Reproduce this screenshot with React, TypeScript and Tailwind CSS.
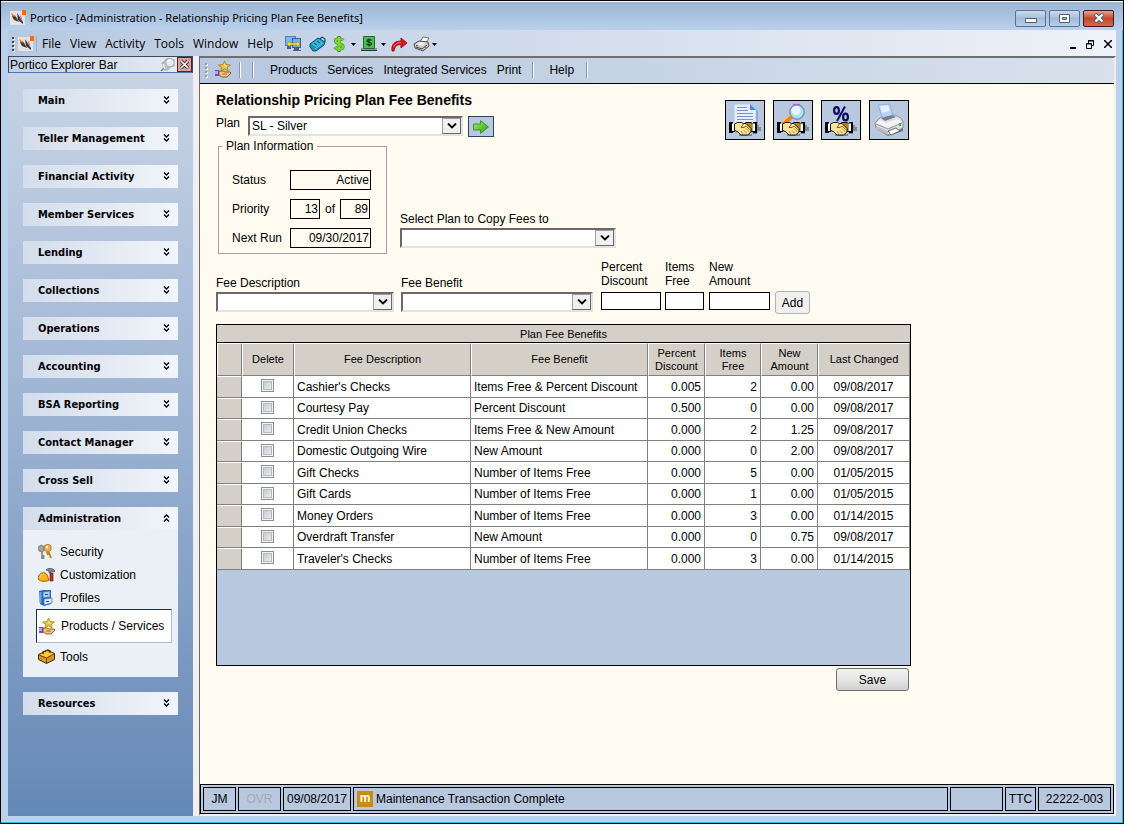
import { useId, useState, type ReactNode } from "react";

const FEES = [
  ["Cashier's Checks", "Items Free & Percent Discount", "0.005", "2", "0.00", "09/08/2017"],
  ["Courtesy Pay", "Percent Discount", "0.500", "0", "0.00", "09/08/2017"],
  ["Credit Union Checks", "Items Free & New Amount", "0.000", "2", "1.25", "09/08/2017"],
  ["Domestic Outgoing Wire", "New Amount", "0.000", "0", "2.00", "09/08/2017"],
  ["Gift Checks", "Number of Items Free", "0.000", "5", "0.00", "01/05/2015"],
  ["Gift Cards", "Number of Items Free", "0.000", "1", "0.00", "01/05/2015"],
  ["Money Orders", "Number of Items Free", "0.000", "3", "0.00", "01/14/2015"],
  ["Overdraft Transfer", "New Amount", "0.000", "0", "0.75", "09/08/2017"],
  ["Traveler's Checks", "Number of Items Free", "0.000", "3", "0.00", "01/14/2015"],
];

const GROUPS = [
  "Main",
  "Teller Management",
  "Financial Activity",
  "Member Services",
  "Lending",
  "Collections",
  "Operations",
  "Accounting",
  "BSA Reporting",
  "Contact Manager",
  "Cross Sell",
  "Administration",
  "Resources",
];

/* ---------- icons ---------- */

function Logo() {
  return (
    <svg width="17" height="16" viewBox="0 0 17 16" className="shrink-0">
      <path d="M0 1h15v14H0z" fill="#e6e2e4" />
      <path d="M1 3l5 3 1 5-4-3z" fill="#f2733a" />
      <path d="M2 6l4 1 3 5-5-2z" fill="#39393d" />
      <path d="M7 3l2 3 4 6v2L8 10z" fill="#39393d" />
      <path d="M9 4l3 3v4z" fill="#ef8a5e" />
      <path d="M12 0h4v5h-4z" fill="#ff6a00" />
    </svg>
  );
}

function Grip({ light = false }: { light?: boolean }) {
  return (
    <svg width="4" height="16" viewBox="0 0 4 16" className="shrink-0">
      {[1, 5, 9, 13].map((y) => (
        <g key={y}>
          <rect x="1" y={y + 1} width="2" height="2" fill="#fff" />
          <rect x="0" y={y} width="2" height="2" fill={light ? "#8d9bb5" : "#2c4373"} />
        </g>
      ))}
    </svg>
  );
}

function StarHand() {
  return (
    <svg width="16" height="17" viewBox="0 0 16 17" className="shrink-0">
      <path d="M0 9h4v6H0z" fill="#6a4fd0" />
      <path d="M0 10h3v3H0z" fill="#b9a4f4" />
      <path d="M4 10h4l2 1h5l1 1-4 4H7l-3-2z" fill="#f3c583" stroke="#6e4512" strokeWidth=".8" />
      <path d="M7 13h5" stroke="#a66c25" />
      <path d="M9.500 0l1.500 3.500 4.500.5-3.300 2.500 1 3.500-3.700-2-3.700 2 1-3.500L3.500 4 8 3.500z" fill="#f2c230" stroke="#9a7420" strokeWidth=".7" />
      <path d="M9 3l1 2 2 .5" stroke="#fff3a5" fill="none" />
    </svg>
  );
}

function Monitors() {
  return (
    <svg width="17" height="16" viewBox="0 0 17 16">
      <path d="M0 0h11v10H0z" fill="#5d7bb8" />
      <path d="M1 1h9v8H1z" fill="#75b9f3" />
      <path d="M7 2h9v10H7z" fill="#3f5fa4" />
      <path d="M8 3h7v8H8z" fill="#6fb0f0" />
      <path d="M9 12h5v2h2v1H8v-1h1zM2 10h4v3H2z" fill="#4d5d86" />
      <path d="M2 8l3-3v2h7V5l3 3-3 3V9H5v2z" fill="#ffe02e" stroke="#9b7c00" strokeWidth=".5" />
    </svg>
  );
}

function Ticket() {
  return (
    <svg width="17" height="16" viewBox="0 0 17 16">
      <path d="M1 8l8-6 7 4-1 3-8 6H4l-3-4z" fill="#1c93b9" stroke="#084f74" />
      <path d="M2 8l7-5 5 3-7 5z" fill="#3fbcd8" />
      <path d="M5 7l3 2M8 5l3 2" stroke="#075e80" strokeWidth="1.200" />
      <path d="M11 3l2-2 3 2v3" fill="none" stroke="#084f74" strokeWidth="1.200" />
      <path d="M6 13l8-6" stroke="#7fdcf0" strokeWidth=".8" />
    </svg>
  );
}

function Dollar() {
  return (
    <svg width="12" height="16" viewBox="0 0 12 16">
      <path
        d="M10 4.500C9 2.500 2.500 2 2.500 5S10 7.500 10 10.500 3.500 14 2 11M6 0v16"
        fill="none"
        stroke="#3b8a1a"
        strokeWidth="3.200"
      />
      <path d="M10 4.500C9 2.500 2.500 2 2.500 5S10 7.500 10 10.500 3.500 14 2 11M6 1v14" fill="none" stroke="#7ed82f" strokeWidth="2" />
    </svg>
  );
}

function Cash() {
  return (
    <svg width="16" height="16" viewBox="0 0 16 16">
      <path d="M0 12h16v3H0z" fill="#8a929b" />
      <path d="M0 14h16v1H0z" fill="#2c3036" />
      <path d="M2.500.5h11v12h-11z" fill="#57b757" stroke="#1e6d28" />
      <path d="M10.500 4.500c-1-1.300-4.500-1.300-4.500.4s4.500 1 4.500 2.900-3.800 1.500-5 .1M8 2.500v8" fill="none" stroke="#0a3f10" strokeWidth="1.200" />
    </svg>
  );
}

function RedArrow() {
  return (
    <svg width="17" height="15" viewBox="0 0 17 15">
      <path d="M1 14C0 7 4 4 10 4V1l6 5-6 5V8C6 7 4 9 3 14z" fill="#df1717" stroke="#7d0707" strokeWidth=".8" />
      <path d="M2.500 10C4 7 6 5.500 10 5.500" stroke="#ff7b6e" fill="none" />
    </svg>
  );
}

function SmallPrinter() {
  return (
    <svg width="17" height="16" viewBox="0 0 17 16">
      <path d="M7 6l3-5 6 1-4 6z" fill="#fff" stroke="#555" strokeWidth=".8" />
      <path d="M1 8l5-3 9 1 1 4-6 5-8-3z" fill="#c9c9c9" stroke="#3d3d3d" strokeWidth=".9" />
      <path d="M3 8l4-2 6 1-4 3z" fill="#efefef" />
      <path d="M3 11l6 2 5-4" fill="none" stroke="#4a4a4a" />
      <path d="M3 9h2v1H3z" fill="#e02020" />
      <path d="M11 11h2v1h-2z" fill="#2fa12f" />
    </svg>
  );
}

function Keys() {
  return (
    <svg width="15" height="16" viewBox="0 0 15 16">
      <path d="M0 3l3-2 4 2v3L4 8 1 7z" fill="#a3a3a3" stroke="#666" strokeWidth=".7" />
      <path d="M4 7v8M5.500 11v4" stroke="#8a8a8a" strokeWidth="1.800" />
      <path d="M6 2l4-2 3 2v4l-3 2-4-2z" fill="#e9b45a" stroke="#9b6518" strokeWidth=".8" />
      <path d="M8 2h2v2H8z" fill="#fff3cf" />
      <path d="M9 8l1 3M10.500 7.500L13 14" stroke="#c8811b" strokeWidth="2" />
    </svg>
  );
}

function HardHat() {
  return (
    <svg width="17" height="14" viewBox="0 0 17 14">
      <path d="M0 11c0-5 4-7 7-6 2 1 3 3 3 5l1 2c-3 2-8 2-11-1z" fill="#ffb41c" stroke="#8f5200" strokeWidth=".9" />
      <path d="M2 9c1-2 2-3 4-3" stroke="#ffe28a" fill="none" />
      <path d="M12 5h3v8h-3z" fill="#c62f17" stroke="#5d1207" strokeWidth=".6" />
      <path d="M8 2l3-2 4 1 2 2-1 1-3-1v2h-2V3z" fill="#7e8790" stroke="#32373c" strokeWidth=".6" />
    </svg>
  );
}

function Cabinet() {
  return (
    <svg width="15" height="16" viewBox="0 0 15 16">
      <path d="M1 1l4-1h8v14l-7 2-4-2z" fill="#2f67b8" />
      <path d="M5 2l7-1v6l-7 1z" fill="#a9cff2" stroke="#3b6ca9" strokeWidth=".7" />
      <path d="M6 9l8-1v5l-8 2z" fill="#d4e9fb" stroke="#3b6ca9" strokeWidth=".7" />
      <path d="M7 4h3v1H7zM8 11h3v1H8z" fill="#21508e" />
      <path d="M2.500 2v11" stroke="#6fa3e4" strokeWidth="2" />
    </svg>
  );
}

function Toolbox() {
  return (
    <svg width="17" height="15" viewBox="0 0 17 15">
      <path d="M.5 5.500l9-4 7 3v6l-8 4-8-4z" fill="#e79c12" stroke="#442500" />
      <path d="M1 6l7 3 8-4-7-3z" fill="#ffc935" />
      <path d="M1 6l7.500 3 7.500-4M8.500 9v5" fill="none" stroke="#6f3c00" />
      <path d="M5 5V3l5-2 2 1v2" fill="none" stroke="#442500" strokeWidth="1.300" />
      <path d="M3 8h2v2H3zM11 8h2v2h-2z" fill="#fff1a0" stroke="#6f3c00" strokeWidth=".5" />
    </svg>
  );
}

function Pin() {
  return (
    <svg width="15" height="14" viewBox="0 0 15 14">
      <path d="M1 13l4-4" stroke="#777" strokeWidth="1.200" />
      <path d="M2 5l2 7 4 0 2-3 4-1V2l-4-2-4 1-2 3z" fill="#b9bcc2" stroke="#999ca3" strokeWidth=".8" />
      <circle cx="10" cy="4.500" r="3.500" fill="#e9eaee" />
      <path d="M3 6l2 5" stroke="#f4f4f6" strokeWidth="1.500" />
      <path d="M8 3.500c1-1.500 2-1.500 3-1" stroke="#fff" fill="none" strokeWidth="1.300" />
    </svg>
  );
}

function Handshake() {
  return (
    <g>
      <path d="M31 25h3v2h2v4h-4v3h-5v2H14v-2h13l4-4z" fill="#868a91" />
      <path d="M4 22h4v2h2v8H8v1H4z" fill="#000" />
      <path d="M7 23.500h2.500v7.500H7z" fill="#fff" />
      <path d="M18 24.500l3-2h5l2 1.500v7.500h-3l-2 2z" fill="#b9820f" stroke="#000" strokeWidth=".9" />
      <path d="M28 22h4v11h-4z" fill="#000" />
      <path d="M27.500 23.500h2.500v7.500h-2.500z" fill="#fff" />
      <path
        d="M9.500 24l3-1.500h4l2 1 2.500 0 5 5v3l-1.500 2-2 1.500h-6.500l-3.500-3.500-3-1z"
        fill="#ffe39a"
        stroke="#000"
        strokeWidth=".9"
      />
      <path d="M18.500 24l-2.500 3.500h3l2-1.500 4.500 4" fill="none" stroke="#7a4f08" strokeWidth=".9" />
      <path d="M19 30.500l3 3M21 28.500l3.500 3.500M16 31l2 3" fill="none" stroke="#a87a25" strokeWidth=".8" />
    </g>
  );
}

function PlanDocument() {
  return (
    <svg width="38" height="38" viewBox="1 1 38 38">
      <path d="M10 6h18l5 5v22H10z" fill="#8fa3c4" />
      <path d="M9 4h17l5 5v23H9z" fill="#e5eefc" stroke="#a9c1ea" strokeWidth=".8" />
      <path d="M25 4l6 6h-6z" fill="#2f8ee2" />
      <path d="M12 7.500h10M12 10.500h11M12 13.500h16M12 16.500h16M12 19.500h16" stroke="#7892c8" />
      <Handshake />
    </svg>
  );
}

function PlanSearch() {
  return (
    <svg width="38" height="38" viewBox="1 1 38 38">
      <path d="M10 24l9-8" stroke="#ea8420" strokeWidth="4.500" />
      <path d="M9 22l9-8" stroke="#ffc46b" strokeWidth="1.400" />
      <path d="M8.500 23l3 3" stroke="#b93ed0" strokeWidth="1.500" />
      <circle cx="24" cy="12" r="7.200" fill="#a6e3fa" stroke="#8492ad" strokeWidth="1.500" />
      <path d="M20 4.500h7" stroke="#d04fe0" strokeWidth="1.300" />
      <circle cx="23" cy="10.500" r="4.500" fill="#e6f9ff" />
      <Handshake />
    </svg>
  );
}

function PlanPercent() {
  return (
    <svg width="38" height="38" viewBox="1 1 38 38">
      <ellipse cx="15.500" cy="10.500" rx="2.400" ry="3.400" fill="none" stroke="#0b0b63" strokeWidth="2.200" />
      <ellipse cx="24.500" cy="17" rx="2.400" ry="3.400" fill="none" stroke="#0b0b63" strokeWidth="2.200" />
      <path d="M24 6.500l-8 14.500" stroke="#0b0b63" strokeWidth="2" />
      <Handshake />
    </svg>
  );
}

function BigPrinter() {
  return (
    <svg width="38" height="38" viewBox="1 1 38 38">
      <path d="M9 30l10 6 15-5v-9l-3-4z" fill="#6d727b" />
      <path d="M6 23l6-6 14-2 6 3 2 4v6l-14 7-13-7z" fill="#dedee1" stroke="#85858a" strokeWidth=".8" />
      <path d="M9 5l12-1 3 12-10 3z" fill="#b7d2fa" stroke="#8aa8d8" strokeWidth=".8" />
      <path d="M11 6l8-1 2 6-8 2z" fill="#e4efff" />
      <path d="M12 18l11-3 4 2-11 4z" fill="#7d7d84" />
      <path d="M7 23l12 5 14-6-4-3-12 4-6-3z" fill="#f4f4f6" />
      <path d="M7 24l12 5 14-6" fill="none" stroke="#8f8f96" strokeWidth=".9" />
      <path d="M7 26l12 5v4L7 29z" fill="#bdbdc3" />
      <path d="M19 31l8-3 4 3-9 4z" fill="#fafafa" stroke="#4b4b50" strokeWidth=".8" />
      <path d="M30 23h2v3h-2z" fill="#46b53f" />
    </svg>
  );
}

function GoArrow() {
  return (
    <svg width="16" height="14" viewBox="0 0 16 14">
      <defs>
        <linearGradient id="go" x2="1" y2="1">
          <stop stopColor="#a6f06a" />
          <stop offset="1" stopColor="#1fa010" />
        </linearGradient>
      </defs>
      <path d="M.5 4h7V.5l8 6.500-8 6.500V10h-7z" fill="url(#go)" stroke="#3c8f24" strokeWidth=".9" />
    </svg>
  );
}

function DropArrow() {
  return (
    <svg width="5" height="3" viewBox="0 0 5 3" className="shrink-0">
      <path d="M0 0h5L2.500 3z" />
    </svg>
  );
}

function Chevrons({ up }: { up: boolean }) {
  return (
    <svg width="7" height="8" viewBox="0 0 7 8" className={up ? "mb-0.5 rotate-180" : "mb-0.5"}>
      <path d="M1 .5L3.500 3 6 .5M1 4.500L3.500 7 6 4.500" fill="none" stroke="#000" strokeWidth="1.300" />
    </svg>
  );
}

/* ---------- window chrome ---------- */

function TitleBar() {
  return (
    <header className="flex h-[29px] items-center gap-[3px] border-t border-white bg-linear-to-b from-[#9cb5d2] to-[#b9d1ee] px-[9px] pt-1 font-['Noto_Sans',sans-serif]">
      <Logo />
      <h1 className="grow truncate text-[11px]">Portico - [Administration - Relationship Pricing Plan Fee Benefits]</h1>
      <div className="flex gap-[3px]">
        <button
          aria-label="Minimize"
          className="flex h-[17px] w-[31px] items-center justify-center rounded-[2px] border border-[#5b7391] bg-linear-to-b from-[#cbdbee] via-[#a5bcd7] to-[#b7cee8] pt-1"
        >
          <svg width="12" height="5" viewBox="0 0 12 5">
            <path d="M.5.5h11v4H.5z" fill="#fff" stroke="#53606f" />
          </svg>
        </button>
        <button
          aria-label="Restore"
          className="flex h-[17px] w-[31px] items-center justify-center rounded-[2px] border border-[#5b7391] bg-linear-to-b from-[#cbdbee] via-[#a5bcd7] to-[#b7cee8]"
        >
          <svg width="11" height="9" viewBox="0 0 11 9">
            <path d="M.5.5h10v8H.5z" fill="#fff" stroke="#53606f" />
            <path d="M3.500 3.500h4v2h-4z" fill="#9db7d6" stroke="#53606f" />
          </svg>
        </button>
        <button
          aria-label="Close"
          className="flex h-[17px] w-[31px] items-center justify-center rounded-[2px] border border-[#4d1515] bg-linear-to-b from-[#e5a193] via-[#c4452c] to-[#cf6a50]"
        >
          <svg width="12" height="10" viewBox="0 0 12 10">
            <path d="M2 1l8 8M10 1L2 9" stroke="#53606f" strokeWidth="4" />
            <path d="M2.500 1.500l7 7M9.500 1.500l-7 7" stroke="#fff" strokeWidth="2.300" />
          </svg>
        </button>
      </div>
    </header>
  );
}

function MenuBar() {
  return (
    <nav className="flex h-[26px] items-center bg-linear-to-r from-[#b8c8e0] to-[#eef2f8] px-1 pt-0.5 font-['Open_Sans',sans-serif] text-[12px]">
      <Grip />
      <div className="ml-0.5 border-r border-[#8fb0dc] pr-px">
        <Logo />
      </div>
      {["File", "View", "Activity", "Tools", "Window", "Help"].map((item) => (
        <button key={item} className="pr-1 pl-[5px]">
          {item}
        </button>
      ))}
      <div className="ml-2 flex items-center gap-[5px]">
        <button aria-label="Connections" className="w-[19px]"><Monitors /></button>
        <button aria-label="Tickets" className="w-[19px]"><Ticket /></button>
        <button aria-label="Money" className="flex items-center gap-[6px]"><Dollar /><DropArrow /></button>
        <button aria-label="Cash" className="flex items-center gap-1"><Cash /><DropArrow /></button>
        <button aria-label="Forward"><RedArrow /></button>
        <button aria-label="Print" className="flex items-center gap-0.5"><SmallPrinter /><DropArrow /></button>
      </div>
      <div className="ml-auto flex items-center gap-[10px]">
        <button aria-label="Minimize document">
          <svg width="6" height="9" viewBox="0 0 6 9"><path d="M0 7h6v2H0z" /></svg>
        </button>
        <button aria-label="Restore document">
          <svg width="8" height="9" viewBox="0 0 8 9">
            <path d="M2.500 3V.5h5v5H5M.5 3.500h5v5h-5zM2 1h6M0 4h6" fill="none" stroke="#000" />
          </svg>
        </button>
        <button aria-label="Close document">
          <svg width="8" height="8" viewBox="0 0 8 8"><path d="M0 0l8 8M8 0L0 8" stroke="#000" strokeWidth="1.500" /></svg>
        </button>
      </div>
    </nav>
  );
}

/* ---------- explorer bar ---------- */

const ADMIN_ITEMS: [string, ReactNode][] = [
  ["Security", <Keys />],
  ["Customization", <HardHat />],
  ["Profiles", <Cabinet />],
  ["Products / Services", <StarHand />],
  ["Tools", <Toolbox />],
];

function ExplorerBar() {
  return (
    <aside className="flex w-[185px] shrink-0 flex-col bg-linear-to-b from-[#cad6e7] via-[#9fb5d4] via-45% to-[#6488b6]">
      <div className="flex h-[17px] items-center border border-[#3c4a5e] border-b-[#4a76ae] bg-linear-to-r from-[#c3d0e4] to-[#e8edf5] text-[12px]">
        <span className="grow pl-px">Portico Explorer Bar</span>
        <button aria-label="Pin" className="mr-[2px]"><Pin /></button>
        <button aria-label="Close explorer bar" className="flex size-[15px] items-center justify-center border border-[#5d1f1f] bg-[#d9a19c]">
          <svg width="9" height="9" viewBox="0 0 9 9">
            <path d="M1 1l7 7M8 1L1 8" stroke="#333" strokeWidth="3.500" />
            <path d="M1 1l7 7M8 1L1 8" stroke="#fff" strokeWidth="1.700" />
          </svg>
        </button>
      </div>
      <div className="flex flex-col gap-[15px] px-[15px] py-4">
        {GROUPS.map((group) => {
          const open = group === "Administration";
          return (
            <section key={group}>
              <button
                aria-expanded={open}
                className="flex h-[23px] w-full items-center justify-between bg-linear-to-r from-[#d3ddec] to-[#f2f5fa] pr-2 pl-[15px] font-['DejaVu_Sans_Condensed','DejaVu_Sans',sans-serif] text-[11px] font-bold"
              >
                <span className="pt-0.5">{group}</span>
                <Chevrons up={open} />
              </button>
              {open && (
                <ul className="bg-[#eaf0f5] pt-[10px] pr-[6px] pb-[9px] pl-[13px] text-[12px]">
                  {ADMIN_ITEMS.map(([label, icon]) => (
                    <li key={label}>
                      <a
                        href="#"
                        className={
                          label === "Products / Services"
                            ? "mb-0.5 flex h-[34px] items-center border border-t-[#1f2d47] border-r-[#a9bad2] border-b-[#a9bad2] border-l-[#1f2d47] bg-white pl-0.5"
                            : "flex h-[23px] items-center pl-[2px]"
                        }
                      >
                        <span className="w-[22px]">{icon}</span>
                        {label}
                      </a>
                    </li>
                  ))}
                </ul>
              )}
            </section>
          );
        })}
      </div>
    </aside>
  );
}

/* ---------- form ---------- */

function Separator() {
  return <span className="h-4 w-0.5 border-r border-l border-l-[#8796b0] border-r-white" />;
}

function Toolbar() {
  return (
    <div className="flex h-[26px] items-center border-b border-black bg-linear-to-r from-[#b7c7df] to-[#d9e2ec] pb-0.5 pl-[5px] text-[12px]">
      <Grip light />
      <button aria-label="Products / Services" className="mr-2 ml-[6px]"><StarHand /></button>
      <Separator />
      <span className="w-[11px]" />
      <Separator />
      <div className="flex pr-[6px] pl-[11px]">
        {["Products", "Services", "Integrated Services", "Print"].map((item) => (
          <button key={item} className="px-[5px]">
            {item}
          </button>
        ))}
      </div>
      <Separator />
      <button className="pr-3 pl-[15px]">Help</button>
      <Separator />
    </div>
  );
}

function Combo({ id, options, className }: { id: string; options: string[]; className: string }) {
  return (
    <div
      className={`relative h-5 border-2 border-t-[#696969] border-r-[#e3e3e3] border-b-[#e3e3e3] border-l-[#696969] bg-white ${className}`}
    >
      <select id={id} className="block h-4 w-full appearance-none bg-transparent pl-0.5 leading-4 outline-none">
        {options.map((option) => (
          <option key={option}>{option}</option>
        ))}
      </select>
      <span className="pointer-events-none absolute top-0 right-0 flex h-4 w-[19px] items-center justify-center border border-t-[#a0a0a0] border-r-[#696969] border-b-[#696969] border-l-[#a0a0a0] bg-[#f0f0f0]">
        <svg width="10" height="6" viewBox="0 0 10 6">
          <path d="M1 .5l4 4 4-4" fill="none" stroke="#000" strokeWidth="1.800" />
        </svg>
      </span>
    </div>
  );
}

function ReadOnly({ label, value, className }: { label: string; value: string; className: string }) {
  return (
    <input
      aria-label={label}
      readOnly
      value={value}
      className={`h-5 border border-black pr-px text-right outline-none ${className}`}
    />
  );
}

function SmallField({ label, className }: { label: string; className: string }) {
  const id = useId();
  return (
    <div className={`mb-1 flex flex-col gap-1 ${className}`}>
      <label htmlFor={id} className="w-min">
        {label}
      </label>
      <input id={id} className="h-[18px] w-full border border-black bg-white px-0.5 outline-none" />
    </div>
  );
}

function FeeTable() {
  const [checked, setChecked] = useState<string[]>([]);

  const toggle = (fee: string) =>
    setChecked((prev) => (prev.includes(fee) ? prev.filter((f) => f !== fee) : [...prev, fee]));

  const head = "border-t border-r border-b border-l border-t-white border-l-white border-r-[#808080] border-b-[#808080] font-normal leading-[13px] h-[33px]";
  const cell = "border-r border-b border-[#808080] px-[3px]";

  return (
    <div className="mt-[10px] min-h-[342px] border border-black bg-[#b8c8df]">
      <table className="w-full table-fixed border-separate border-spacing-0">
        <caption className="h-[18px] border-b border-black bg-[#d4d0c8] text-center text-[11px] leading-[18px]">Plan Fee Benefits</caption>
        <colgroup>
          <col className="w-[25px]" />
          <col className="w-[52px]" />
          <col />
          <col />
          <col className="w-[57px]" />
          <col className="w-[56px]" />
          <col className="w-[57px]" />
          <col className="w-[92px]" />
        </colgroup>
        <thead className="bg-[#d4d0c8] text-[11px]">
          <tr>
            <td className={head} />
            <th className={head}>Delete</th>
            <th className={head}>Fee Description</th>
            <th className={head}>Fee Benefit</th>
            <th className={head}>Percent Discount</th>
            <th className={head}>Items<br />Free</th>
            <th className={head}>New<br />Amount</th>
            <th className={head}>Last Changed</th>
          </tr>
        </thead>
        <tbody className="bg-white">
          {FEES.map(([fee, benefit, percent, items, amount, date]) => (
            <tr key={fee} className="h-[21px] leading-[14px] odd:h-[22px]">
              <td className="border-t border-r border-b border-t-white border-r-[#808080] border-b-[#808080] bg-[#d4d0c8]" />
              <td className={`${cell} pb-0.5`}>
                <input
                  type="checkbox"
                  aria-label={`Delete ${fee}`}
                  checked={checked.includes(fee)}
                  onChange={() => toggle(fee)}
                  className="mx-auto block size-[13px] appearance-none border border-[#8e8f8f] bg-linear-to-br from-[#bcc3cb] to-[#f4f5f6] shadow-[inset_0_0_0_1px_#f4f4f4,inset_0_0_0_2px_#b5bac1] checked:from-[#2b4a7c] checked:to-[#4a6fa8]"
                />
              </td>
              <td className={cell}>{fee}</td>
              <td className={cell}>{benefit}</td>
              <td className={`${cell} text-right`}>{percent}</td>
              <td className={`${cell} text-right`}>{items}</td>
              <td className={`${cell} text-right`}>{amount}</td>
              <td className={`${cell} text-center`}>{date}</td>
            </tr>
          ))}
        </tbody>
      </table>
    </div>
  );
}

const ACTIONS: [string, ReactNode][] = [
  ["Plan details", <PlanDocument />],
  ["Find plan", <PlanSearch />],
  ["Plan rates", <PlanPercent />],
  ["Print plan", <BigPrinter />],
];

function BenefitsForm() {
  return (
    <form
      className="w-full max-w-[727px] grow px-4 pt-2 text-[12px] leading-[14px]"
      onSubmit={(e) => e.preventDefault()}
    >
      <div className="flex justify-between pr-0.5">
        <div>
          <h2 className="text-[14px] leading-4 font-bold">Relationship Pricing Plan Fee Benefits</h2>
          <div className="mt-2 flex">
            <label htmlFor="plan" className="w-8">Plan</label>
            <Combo id="plan" options={["SL - Silver"]} className="w-[215px]" />
            <button aria-label="Go" className="ml-[5px] flex h-[21px] w-[26px] items-center justify-center border border-[#29436b] bg-[#b8c8df]">
              <GoArrow />
            </button>
          </div>
          <div className="mt-0.5 flex items-end">
            <fieldset className="ml-0.5 w-[169px] border border-[#a0a0a0]">
              <legend className="ml-[3px] px-1">Plan Information</legend>
              <div className="flex flex-col gap-[9px] pt-[17px] pb-[5px] pl-[13px]">
                <div className="flex items-center">
                  <span className="w-[58px]">Status</span>
                  <ReadOnly label="Status" value="Active" className="w-[81px]" />
                </div>
                <div className="flex items-center">
                  <span className="w-[58px]">Priority</span>
                  <ReadOnly label="Priority" value="13" className="w-[30px]" />
                  <span className="w-5 text-center">of</span>
                  <ReadOnly label="Priority total" value="89" className="w-[30px]" />
                </div>
                <div className="flex items-center">
                  <span className="w-[58px]">Next Run</span>
                  <ReadOnly label="Next Run" value="09/30/2017" className="w-[81px]" />
                </div>
              </div>
            </fieldset>
            <div className="mb-[6px] ml-[13px] flex flex-col gap-0.5">
              <label htmlFor="copy">Select Plan to Copy Fees to</label>
              <Combo id="copy" options={[""]} className="w-[216px]" />
            </div>
          </div>
        </div>
        <div className="mt-2 flex items-start gap-2">
          {ACTIONS.map(([label, icon]) => (
            <button key={label} type="button" aria-label={label} className="size-10 border border-black bg-[#b8c8df]">
              {icon}
            </button>
          ))}
        </div>
      </div>

      <div className="mt-[6px] flex items-end">
        <div className="mb-0.5 flex flex-col gap-0.5">
          <label htmlFor="fee-description">Fee Description</label>
          <Combo id="fee-description" options={[""]} className="w-[178px]" />
        </div>
        <div className="mb-0.5 ml-[7px] flex flex-col gap-0.5">
          <label htmlFor="fee-benefit">Fee Benefit</label>
          <Combo id="fee-benefit" options={[""]} className="w-48" />
        </div>
        <SmallField label="Percent Discount" className="ml-2 w-[60px]" />
        <SmallField label="Items Free" className="ml-1 w-[39px]" />
        <SmallField label="New Amount" className="ml-[5px] w-[61px]" />
        <button type="button" className="ml-[5px] h-[23px] w-[35px] rounded-[3px] border border-[#adb2b5] bg-[#f0f0f0]">
          Add
        </button>
      </div>

      <FeeTable />

      <div className="mt-0.5 flex justify-end pr-0.5">
        <button className="h-[23px] w-[73px] rounded-[3px] border border-[#707070] bg-linear-to-b from-[#f2f2f2] via-[#e6e6e6] to-[#cfcfcf]">
          Save
        </button>
      </div>
    </form>
  );
}

function StatusBar() {
  const cell = "flex items-center justify-center border border-black";
  return (
    <footer className="flex h-[30px] gap-0.5 border border-black bg-[#b8c8df] p-0.5 text-[12px]">
      <span className={`${cell} w-[33px]`}>JM</span>
      <span className={`${cell} w-[43px] text-[#a5a9b0]`}>OVR</span>
      <span className={`${cell} w-[68px]`}>09/08/2017</span>
      <span className="flex grow items-center gap-[3px] border border-black pl-[3px]">
        <span className="flex size-4 items-center justify-center bg-[#c98d0a] pb-0.5 font-bold text-white">m</span>
        Maintenance Transaction Complete
      </span>
      <span className={`${cell} w-[53px]`} />
      <span className={`${cell} w-[31px]`}>TTC</span>
      <span className={`${cell} w-[73px]`}>22222-003</span>
    </footer>
  );
}

export default function App() {
  return (
    <div className="flex min-h-screen flex-col overflow-hidden border border-black bg-[#b9d1ea] font-['Liberation_Sans',Arial,sans-serif] text-black">
      <TitleBar />
      <div className="flex grow flex-col border-r border-b border-[#22c4dc] pr-[6px] pb-[6px] pl-[7px]">
        <MenuBar />
        <div className="flex grow">
          <ExplorerBar />
          <div className="w-[6px] shrink-0 bg-[#f0f0f0]" />
          <main className="flex min-w-0 grow flex-col border-t-2 border-r-2 border-b-2 border-l border-t-[#6f6f6f] border-r-[#f0f0f0] border-b-[#f0f0f0] border-l-[#696969] bg-[#fffbf0]">
            <Toolbar />
            <BenefitsForm />
            <StatusBar />
          </main>
        </div>
      </div>
    </div>
  );
}
